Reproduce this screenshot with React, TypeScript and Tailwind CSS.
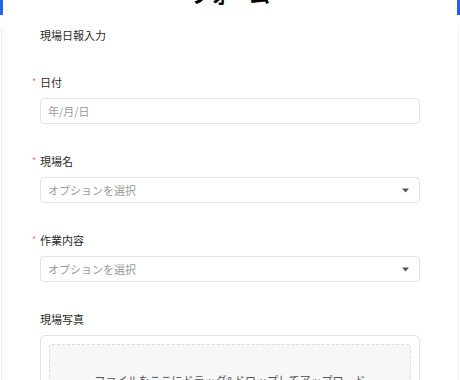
const font = { fontFamily: '"Noto Sans CJK JP", "Noto Sans", sans-serif' };

function Label({ text, required }: { text: string; required?: boolean }) {
  return (
    <div className="mb-2 flex h-4 items-center text-[11px] leading-4 text-[#2a2a2a]">
      {required && (
        <span className="-ml-[8px] w-[8px] text-[9px] text-[#f87171]">*</span>
      )}
      <span>{text}</span>
    </div>
  );
}

function Caret() {
  return (
    <svg width="7" height="5" viewBox="0 0 7 5" className="text-[#555]">
      <path d="M0 0.5h7L3.5 4.5z" fill="currentColor" />
    </svg>
  );
}

export default function App() {
  return (
    <div className="h-[380px] w-[460px] overflow-hidden bg-white" style={font}>
      {/* header, scrolled out of view */}
      <div className="h-[15px] overflow-hidden border-x-[3px] border-[#2563eb]">
        <div className="-mt-[19px] text-center text-[20px] font-bold leading-[28px] text-black">
          フォーム
        </div>
      </div>

      <div className="mx-[1px] h-[365px] border-x border-[#eeeeee] px-[38px]">
        <div className="mt-[12px] mb-[31px] h-4 text-[11px] leading-4 text-[#2a2a2a]">
          現場日報入力
        </div>

        <div className="mb-[29px]">
          <Label text="日付" required />
          <div className="flex h-[26px] items-center rounded-[4px] border border-[#e3e3e3] px-[7px] text-[11px] text-[#9a9a9a]">
            年/月/日
          </div>
        </div>

        <div className="mb-[29px]">
          <Label text="現場名" required />
          <div className="flex h-[26px] items-center justify-between rounded-[4px] border border-[#e3e3e3] pl-[7px] pr-[10px] text-[11px] text-[#9a9a9a]">
            <span>オプションを選択</span>
            <Caret />
          </div>
        </div>

        <div className="mb-[29px]">
          <Label text="作業内容" required />
          <div className="flex h-[26px] items-center justify-between rounded-[4px] border border-[#e3e3e3] pl-[7px] pr-[10px] text-[11px] text-[#9a9a9a]">
            <span>オプションを選択</span>
            <Caret />
          </div>
        </div>

        <div>
          <Label text="現場写真" />
          <div className="rounded-[5px] border border-[#e3e3e3] p-[8px]">
            <div className="flex h-[90px] justify-center rounded-[3px] border border-dashed border-[#dddddd] bg-[#f7f7f8] pt-[27px] text-[11px] leading-4 text-[#555]">
              ファイルをここにドラッグ&ドロップしてアップロード
            </div>
          </div>
        </div>
      </div>
    </div>
  );
}
